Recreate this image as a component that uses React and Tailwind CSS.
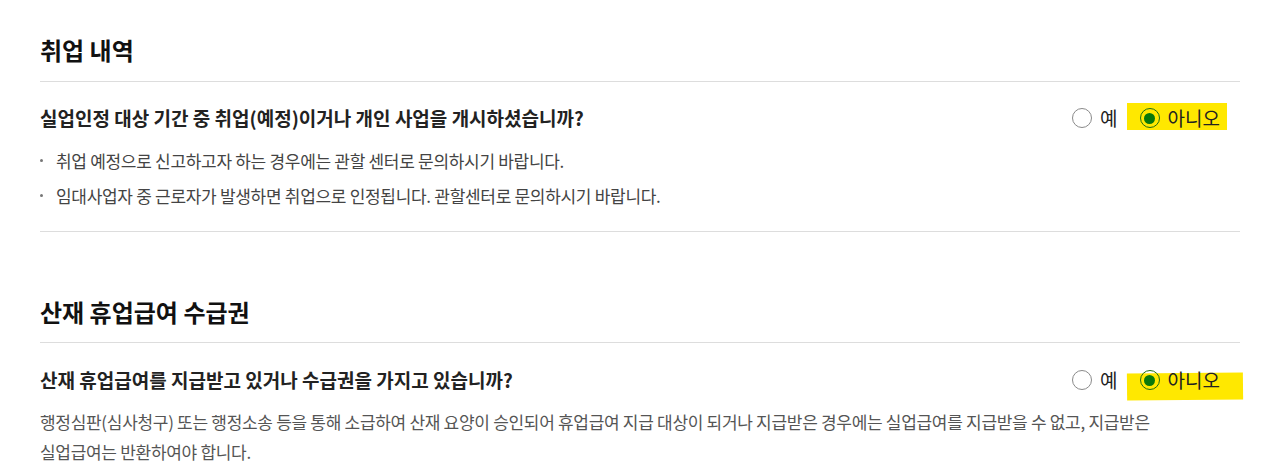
import React from "react";

const font = { fontFamily: '"Noto Sans CJK KR", "Noto Sans", sans-serif' };

function Radio({ checked }) {
  if (checked) {
    return (
      <span className="relative flex h-[20px] w-[20px] items-center justify-center rounded-full border-[1.5px] border-[#1f6e12]">
        <span className="h-[11px] w-[11px] rounded-full bg-[#08780a]" />
      </span>
    );
  }
  return <span className="h-[20px] w-[20px] rounded-full border border-[#8a8a8a] bg-white" />;
}

function RadioGroup({ variant }) {
  return (
    <div className="flex items-center pr-[20px] text-[19px] text-[#222]">
      <label className="flex items-center gap-[8px]">
        <Radio />
        <span>예</span>
      </label>
      <label className="relative ml-[22px] flex items-center gap-[8px]">
        {variant === 1 ? (
          <span className="absolute -left-[13px] -right-[7px] -top-[1px] bottom-[2px] bg-[#ffe800]" />
        ) : (
          <span className="absolute -left-[13px] -right-[23px] top-[7px] -bottom-[5px] -rotate-[0.6deg] bg-[#ffe800]" />
        )}
        <span className="relative">
          <Radio checked />
        </span>
        <span className="relative">아니오</span>
      </label>
    </div>
  );
}

export default function App() {
  return (
    <div className="min-h-[467px] bg-white px-[40px]" style={font}>
      <div className="w-[1200px]">
        {/* Section 1 */}
        <section className="border-b border-[#dddddd] pb-[18px]">
          <div className="border-b border-[#dddddd] pt-[34px] pb-[15px]">
            <h2 className="text-[24px] leading-[32px] font-bold text-[#111]">취업 내역</h2>
          </div>
          <div className="mt-[23px] flex h-[26px] items-center justify-between">
            <p className="text-[19px] leading-[26px] font-semibold text-[#222]">
              실업인정 대상 기간 중 취업(예정)이거나 개인 사업을 개시하셨습니까?
            </p>
            <RadioGroup variant={1} />
          </div>
          <ul className="mt-[12px] text-[17px] leading-[35px] tracking-[-0.3px] text-[#444]">
            <li className="flex items-center">
              <span className="mr-[13px] h-[3px] w-[3px] rounded-full bg-[#777]" />
              취업 예정으로 신고하고자 하는 경우에는 관할 센터로 문의하시기 바랍니다.
            </li>
            <li className="flex items-center">
              <span className="mr-[13px] h-[3px] w-[3px] rounded-full bg-[#777]" />
              임대사업자 중 근로자가 발생하면 취업으로 인정됩니다. 관할센터로 문의하시기 바랍니다.
            </li>
          </ul>
        </section>

        {/* Section 2 */}
        <section className="pt-[64px]">
          <div className="border-b border-[#dddddd] pb-[14px]">
            <h2 className="text-[24px] leading-[32px] font-bold text-[#111]">산재 휴업급여 수급권</h2>
          </div>
          <div className="mt-[24px] flex h-[26px] items-center justify-between">
            <p className="text-[19px] leading-[26px] font-semibold text-[#222]">
              산재 휴업급여를 지급받고 있거나 수급권을 가지고 있습니까?
            </p>
            <RadioGroup variant={2} />
          </div>
          <p className="mt-[14px] text-[17px] leading-[30px] tracking-[-0.3px] text-[#555]">
            행정심판(심사청구) 또는 행정소송 등을 통해 소급하여 산재 요양이 승인되어 휴업급여 지급 대상이 되거나 지급받은 경우에는 실업급여를 지급받을 수 없고, 지급받은
            <br />
            실업급여는 반환하여야 합니다.
          </p>
        </section>
      </div>
    </div>
  );
}
